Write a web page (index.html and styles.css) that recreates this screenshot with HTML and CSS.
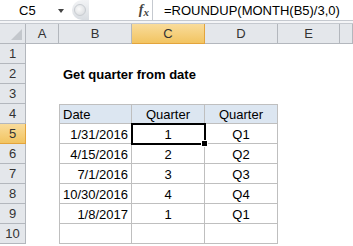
FILE: index.html
```html
<!DOCTYPE html>
<html lang="en">
<head>
  <meta charset="UTF-8" />
  <title>Get quarter from date</title>
  <link rel="stylesheet" href="styles.css">
</head>
<body>
  <div class="formula-bar">
    <div class="name-box">
      <span class="cell-ref">C5</span>
      <span class="arrow"></span>
    </div>
    <div class="splitter"><span class="dimple"></span></div>
    <div class="fx"><i>f</i><i class="x">x</i></div>
    <div class="formula">=ROUNDUP(MONTH(B5)/3,0)</div>
  </div>
  <div class="band"></div>

  <div class="sheet">
    <div class="hd corner"><span class="tri"></span></div>
    <div class="hd">A</div>
    <div class="hd">B</div>
    <div class="hd active">C</div>
    <div class="hd">D</div>
    <div class="hd">E</div>
    <div class="hd last"></div>

    <div class="rh">1</div><div class="c"></div><div class="c"></div><div class="c"></div><div class="c"></div><div class="c"></div><div class="c"></div>
    <div class="rh">2</div><div class="c"></div><div class="c title">Get quarter from date</div><div class="c"></div><div class="c"></div><div class="c"></div><div class="c"></div>
    <div class="rh">3</div><div class="c"></div><div class="c"></div><div class="c"></div><div class="c"></div><div class="c"></div><div class="c"></div>

    <div class="rh">4</div><div class="c"></div>
    <div class="c t th first">Date</div>
    <div class="c t th center">Quarter</div>
    <div class="c t th center">Quarter</div>
    <div class="c"></div><div class="c"></div>

    <div class="rh active">5</div><div class="c"></div>
    <div class="c t first right">1/31/2016</div>
    <div class="c t center selected">1<span class="handle"></span></div>
    <div class="c t center">Q1</div>
    <div class="c"></div><div class="c"></div>

    <div class="rh">6</div><div class="c"></div>
    <div class="c t first right">4/15/2016</div>
    <div class="c t center">2</div>
    <div class="c t center">Q2</div>
    <div class="c"></div><div class="c"></div>

    <div class="rh">7</div><div class="c"></div>
    <div class="c t first right">7/1/2016</div>
    <div class="c t center">3</div>
    <div class="c t center">Q3</div>
    <div class="c"></div><div class="c"></div>

    <div class="rh">8</div><div class="c"></div>
    <div class="c t first right">10/30/2016</div>
    <div class="c t center">4</div>
    <div class="c t center">Q4</div>
    <div class="c"></div><div class="c"></div>

    <div class="rh">9</div><div class="c"></div>
    <div class="c t first right">1/8/2017</div>
    <div class="c t center">1</div>
    <div class="c t center">Q1</div>
    <div class="c"></div><div class="c"></div>

    <div class="rh">10</div><div class="c"></div>
    <div class="c t first"></div>
    <div class="c t"></div>
    <div class="c t"></div>
    <div class="c"></div><div class="c"></div>
  </div>
</body>
</html>
```

FILE: styles.css
```css
body {
  margin: 0;
  background: white;
  font-family: "Liberation Sans", Arial, sans-serif;
  font-size: 13px;
  color: #000;
  overflow: hidden;
}

.formula-bar {
  display: flex;
  height: 20px;
  border-bottom: 1px solid #c5c9cf;
  align-items: center;
}

.formula-bar > div {
  flex-shrink: 0;
}

.name-box {
  width: 72px;
  height: 100%;
  display: flex;
  align-items: center;
}

.cell-ref {
  display: block;
  box-sizing: border-box;
  width: 58px;
  padding-left: 19px;
}

.arrow {
  width: 0;
  height: 0;
  border-left: 3.5px solid transparent;
  border-right: 3.5px solid transparent;
  border-top: 4px solid #444;
  margin-top: 1px;
}

.splitter {
  width: 17px;
  height: 20px;
  border-radius: 10px 0 0 10px;
  background: linear-gradient(#f2f3f5, #d9dde2);
  display: flex;
  align-items: center;
  padding-left: 2px;
  box-sizing: border-box;
}

.dimple {
  width: 12px;
  height: 12px;
  border-radius: 50%;
  background: radial-gradient(circle at 40% 40%, #fafafa, #d4d7db);
  border: 1px solid #c8ccd1;
  box-sizing: border-box;
}

.fx {
  width: 64px;
  height: 100%;
  box-sizing: border-box;
  border-right: 1px solid #c5c9cf;
  display: flex;
  align-items: center;
  justify-content: flex-end;
  padding-right: 3px;
  font-family: "Liberation Serif", "Times New Roman", serif;
  font-size: 14px;
  font-weight: bold;
  color: #444;
}

.fx .x {
  font-size: 11px;
  margin-top: 3px;
}

.formula {
  padding-left: 11px;
  white-space: nowrap;
}

.band {
  height: 2px;
  background: #f4f5f7;
  border-bottom: 1px solid #c5c9cf;
}

.sheet {
  display: grid;
  grid-template-columns: 26px 33px 73px 73px 73px 62px 1fr;
  grid-auto-rows: 20px;
}

.hd, .rh {
  background: #e4e7eb;
  color: #333;
  display: flex;
  align-items: center;
  justify-content: center;
  box-sizing: border-box;
  border-right: 1px solid #b3b7bd;
  border-bottom: 1px solid #b3b7bd;
  font-size: 13px;
}

.hd.active, .rh.active {
  background: linear-gradient(#f9dc9b, #f2c461);
  border-bottom-color: #e3a43c;
  border-right-color: #e3a43c;
}

.corner {
  position: relative;
}

.tri {
  position: absolute;
  right: 3px;
  bottom: 3px;
  width: 0;
  height: 0;
  border-left: 11px solid transparent;
  border-bottom: 11px solid #c3c7cc;
}

.c {
  box-sizing: border-box;
  display: flex;
  align-items: center;
  white-space: nowrap;
  padding: 1px 3px 0;
}

.title {
  font-weight: bold;
  overflow: visible;
  padding-left: 4px;
}

.t {
  border-right: 1px solid #bfbfbf;
  border-bottom: 1px solid #bfbfbf;
}

.t.first {
  border-left: 1px solid #bfbfbf;
}

.th {
  background: #dce6f1;
  border-top: 1px solid #bfbfbf;
}

.center {
  justify-content: center;
}

.right {
  justify-content: flex-end;
}

.selected {
  position: relative;
  outline: 2px solid #000;
  outline-offset: -1px;
}

.handle {
  position: absolute;
  right: -4px;
  bottom: -4px;
  width: 5px;
  height: 5px;
  background: #000;
  border: 1px solid #fff;
}
```
